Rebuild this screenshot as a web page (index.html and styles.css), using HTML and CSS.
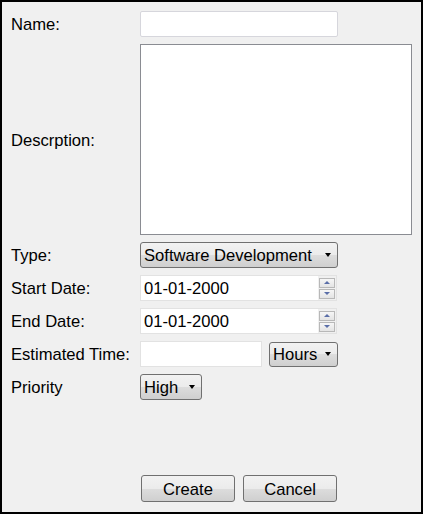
FILE: index.html
```html
<!DOCTYPE html>
<html>
<head>
<meta charset="utf-8">
<link rel="stylesheet" href="styles.css">
</head>
<body>
<div class="window">
  <div class="form">
    <div class="label">Name:</div>
    <div class="field"><div class="input name-input"></div></div>

    <div class="label">Descrption:</div>
    <div class="field"><div class="textarea"></div></div>

    <div class="label">Type:</div>
    <div class="field"><div class="select type-select"><span>Software Development</span><i class="arrow"></i></div></div>

    <div class="label">Start Date:</div>
    <div class="field"><div class="input date-input"><span>01-01-2000</span><div class="spin"><div class="spin-btn"><i class="up"></i></div><div class="spin-btn"><i class="down"></i></div></div></div></div>

    <div class="label">End Date:</div>
    <div class="field"><div class="input date-input"><span>01-01-2000</span><div class="spin"><div class="spin-btn"><i class="up"></i></div><div class="spin-btn"><i class="down"></i></div></div></div></div>

    <div class="label">Estimated Time:</div>
    <div class="field time-field"><div class="input time-input"></div><div class="select hours-select"><span>Hours</span><i class="arrow"></i></div></div>

    <div class="label">Priority</div>
    <div class="field"><div class="select priority-select"><span>High</span><i class="arrow"></i></div></div>
  </div>
  <div class="actions">
    <div class="button">Create</div>
    <div class="button">Cancel</div>
  </div>
</div>
</body>
</html>
```
FILE: styles.css
```css
html, body {
  margin: 0;
  padding: 0;
}
body {
  font-family: "Liberation Sans", Arial, sans-serif;
  font-size: 16.6px;
  color: #000;
  background: #f0f0f0;
}
.window {
  box-sizing: border-box;
  width: 423px;
  height: 514px;
  border: 2px solid #000;
  background: #f0f0f0;
  padding: 9px 9px 10px 9px;
  display: flex;
  flex-direction: column;
  justify-content: space-between;
}
.form {
  display: grid;
  grid-template-columns: 129px auto;
  row-gap: 7px;
}
.label {
  align-self: center;
  line-height: 18px;
  padding-top: 2px;
}
.field {
  display: flex;
  align-items: center;
}
.input {
  box-sizing: border-box;
  height: 26px;
  background: #fff;
  border: 1px solid #dcdce0;
  display: flex;
  align-items: center;
}
.name-input {
  width: 198px;
  border-radius: 2px;
  border-color: #d6d6dc;
}
.textarea {
  box-sizing: border-box;
  width: 272px;
  height: 191px;
  background: #fff;
  border: 1px solid #8a8c92;
}
.date-input {
  width: 197px;
  justify-content: space-between;
  border-color: #e2e2e2;
}
.date-input span {
  padding-left: 3px;
  padding-top: 2px;
}
.spin {
  width: 18px;
  height: 24px;
  background: #f0f0f0;
  display: flex;
  flex-direction: column;
  justify-content: center;
  align-items: center;
  gap: 1px;
}
.spin-btn {
  box-sizing: border-box;
  width: 16px;
  height: 10px;
  border: 1px solid #b8b8b8;
  background: linear-gradient(#f6f6f6, #e4e4e4);
  display: flex;
  align-items: center;
  justify-content: center;
}
.up {
  width: 0;
  height: 0;
  border-left: 3px solid transparent;
  border-right: 3px solid transparent;
  border-bottom: 3px solid #5a6ea8;
}
.down {
  width: 0;
  height: 0;
  border-left: 3px solid transparent;
  border-right: 3px solid transparent;
  border-top: 3px solid #5a6ea8;
}
.select {
  box-sizing: border-box;
  height: 26px;
  border: 1px solid #707070;
  border-radius: 3px;
  background: linear-gradient(#f2f2f2 0%, #ebebeb 50%, #dddddd 50%, #cfcfcf 100%);
  display: flex;
  align-items: center;
  justify-content: space-between;
  padding: 0 6px 0 3px;
}
.select span {
  padding-top: 2px;
}
.arrow {
  width: 0;
  height: 0;
  border-left: 3.5px solid transparent;
  border-right: 3.5px solid transparent;
  border-top: 4px solid #000;
}
.type-select {
  width: 198px;
}
.time-field {
  gap: 7px;
}
.time-input {
  width: 122px;
  border-color: #e2e2e2;
}
.hours-select {
  width: 69px;
  height: 25px;
}
.priority-select {
  width: 62px;
}
.actions {
  display: flex;
  gap: 8px;
  padding-left: 130px;
}
.button {
  box-sizing: border-box;
  width: 94px;
  height: 27px;
  padding-top: 2px;
  border: 1px solid #707070;
  border-radius: 3px;
  background: linear-gradient(#f2f2f2 0%, #ebebeb 50%, #dddddd 50%, #cfcfcf 100%);
  display: flex;
  align-items: center;
  justify-content: center;
}
```
